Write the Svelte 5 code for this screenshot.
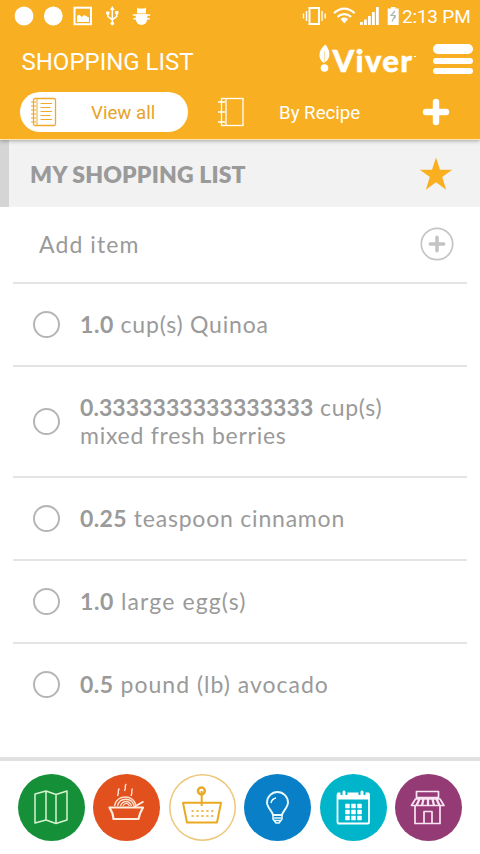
<script>
  const items = [
    { amount: '1.0', rest: 'cup(s) Quinoa', bold: 0.58, spacing: 0.8 },
    { amount: '0.3333333333333333', rest: 'cup(s)', second: 'mixed fresh berries', tall: true, bold: 0.06, spacing: 0.74 },
    { amount: '0.25', rest: 'teaspoon cinnamon', bold: 0.4, spacing: 0.79 },
    { amount: '1.0', rest: 'large egg(s)', bold: 0.58, spacing: 1.13 },
    { amount: '0.5', rest: 'pound (lb) avocado', bold: 0.5, spacing: 1.0 }
  ];
  const nav = [
    { id: 'map', color: '#159039' },
    { id: 'meals', color: '#e1501d' },
    { id: 'basket', color: '#ffffff' },
    { id: 'tips', color: '#087fc6' },
    { id: 'calendar', color: '#00b5ca' },
    { id: 'store', color: '#943b76' }
  ];
</script>

<div class="screen">
  <header>
    <div class="status">
      <svg class="left" width="160" height="33" viewBox="0 0 160 33" fill="#fff">
        <circle cx="24" cy="16" r="9.4" /><circle cx="53.3" cy="16" r="9.4" />
        <rect x="74.5" y="7.7" width="16.5" height="16.5" fill="none" stroke="#fff" stroke-width="2" />
        <path d="M77 22v-6l2-1.500 3 2.500 2-2 5 2.500V22z" />
        <g fill="none" stroke="#fff" stroke-width="1.500"><path d="M112.300 9v15M107.800 13.500v2.800l4.500 3.500 4.500-3.500V12.500" /></g>
        <path d="m112.300 6 2.400 4h-4.800zM106.200 11.500h3.200v3h-3.200zM115.200 11h3.200v3h-3.200z" /><circle cx="112.300" cy="23.600" r="1.800" />
        <path d="m137 7.500 1.500 1h6l1.500-1v6h-9z" />
        <path d="M132.800 14.200h17.400v1.500h-17.400zM133.300 18h16.400v1.500h-16.400z" />
        <path d="M135.700 14.500h11.600v4.500a5.800 6 0 0 1-11.600 0z" />
      </svg>
      <div class="right">
        <svg width="101" height="33" viewBox="300 0 101 33" fill="#fff">
          <rect x="309.500" y="8" width="9.500" height="16" fill="none" stroke="#fff" stroke-width="2" />
          <path d="M306.500 11v10M303.500 13.500v5M322 11v10M325.200 13.500v5" stroke="#fff" stroke-width="1.400" />
          <path d="M334 13.200q10.300-9 20.600 0M337.500 16.800q6.800-5.500 13.600 0" fill="none" stroke="#fff" stroke-width="2.200" />
          <path d="M340.500 19q3.800-2.800 7.600 0l-3.800 4.500z" />
          <path d="M360 22h2.800v3H360zM364 19.500h2.800V25H364zM368 16h2.800v9H368zM372 12h2.800v13H372zM376 7h2.800v18H376z" />
          <path d="M391 7h4.500v1.500h3.200V25h-11V8.500h3.300z" />
          <path d="m395 11-4 4.500h4l-3 6M395.500 15.500l-1 3" fill="none" stroke="#a9b7ad" stroke-width="1.200" />
        </svg>
        <span class="clock">2:13 PM</span>
      </div>
    </div>
    <div class="titlebar">
      <h1>SHOPPING LIST</h1>
      <div class="brand">
        <svg width="14" height="32" viewBox="0 0 14 32">
          <path d="M6.500 .5C2 4 .3 8 .5 12c.3 3.500 2.400 6 4.600 7 4.500-3 5.600-6.300 5.300-9.500C10.200 6 8.500 3 6.500 .5z" fill="#fff" />
          <path d="M5.500 7v11" stroke="#f8dfa9" stroke-width="1.200" />
          <circle cx="5.500" cy="24" r="3.800" fill="#fff" />
        </svg>
        <span class="logo">Viver</span><i></i>
      </div>
      <div class="burger"><b></b><b></b><b></b></div>
    </div>
    <div class="tabs">
      <div class="tab active">
        <svg width="26" height="30" viewBox="0 0 26 30" fill="none" stroke="#efaa2d">
          <rect x="2.500" y="1.500" width="22" height="27" rx="1.500" stroke-width="1.300" />
          <path d="M6 2v26M9.500 6.500h11.500M9.500 10.500h10M9.500 14.500h11.500M9.500 18.500h10M9.500 22.500h11.500" stroke-width="1" />
          <path d="M0 5h5M0 9h5M0 13h5M0 17h5M0 21h5M0 25h5" stroke-width="1.200" />
        </svg>
        <span class="all">View all</span>
      </div>
      <div class="tab plain">
        <svg width="27" height="30" viewBox="0 0 27 30" fill="none" stroke="#fff" stroke-width="1.300">
          <rect x="3.500" y="1.500" width="21.500" height="27" /><path d="M8 2v26M0 5h7M0 15h7M0 25h7" />
        </svg>
        <span class="recipe">By Recipe</span>
      </div>
      <svg class="plus" width="28" height="28" viewBox="0 0 28 28"><path d="M14 4v20M4 14h20" stroke="#fff" stroke-width="6.400" stroke-linecap="round" /></svg>
    </div>
  </header>

  <section class="heading">
    <h2>MY SHOPPING LIST</h2>
    <svg width="34" height="34" viewBox="0 0 34 34"><path fill="#faaf20" d="m17 .5 4 12.300h12.200l-10 7.200 4 12.700L17 25.200 6.800 32.700l4-12.700-10-7.200H13z" /></svg>
  </section>

  <main>
    <div class="add">
      <span>Add item</span>
      <svg width="34" height="34" viewBox="0 0 34 34"><circle cx="17" cy="17" r="15.700" fill="none" stroke="#c5c5c5" stroke-width="1.700" /><path d="M17 10.300v13.400M10.300 17h13.400" stroke="#c3c3c3" stroke-width="3.500" stroke-linecap="round" /></svg>
    </div>
    {#each items as item}
      <div class="item" class:tall={item.tall}>
        <span class="check"></span>
        <p style="letter-spacing: {item.spacing}px"><strong style="letter-spacing: {item.bold}px">{item.amount}</strong> {item.rest}{#if item.second}<br />{item.second}{/if}</p>
      </div>
    {/each}
  </main>

  <footer>
    {#each nav as entry}
      <div class="nav" class:selected={entry.id === 'basket'} style="background: {entry.color}">
        <svg width="67" height="67" viewBox="0 0 67 67" fill="none" stroke="#fff" stroke-linejoin="round">
          {#if entry.id === 'map'}
            <path d="m17 20 11-3 10 3.500L49 17v29l-11 3.500L28 46l-11 3zM28 17v29M38 20.500v29" stroke="#d7f2ce" stroke-width="1.500" />
          {:else if entry.id === 'meals'}
            <path d="M16.500 33.500h33.500L47 39.500l-1.500 5.500H20.500L19.500 39.500z" stroke="#ffede0" stroke-width="2.200" />
            <path d="M21.500 32c1.500-12 20-12 21.500 0M24.500 32c2-9 14.500-9 16.500 0M27.500 32c2-6 9-6 11 0M30 32c1.500-3.500 5-3.500 6.500 0" stroke="#ffe0ce" stroke-width="1.300" />
            <path d="m41 33 9.500-5.500" stroke="#ffede0" stroke-width="2" />
            <path d="M24.500 22q1-2 .8-4t1-3.500M31.500 17q1-2 .8-4t1-3M38 22q1-2 .8-4t.6-3.500" stroke-width="1.400" stroke="#ffe5da" />
          {:else if entry.id === 'basket'}
            <g stroke="#eba923" stroke-width="2"><path d="M14 28.700h38l-4 19.800H18z" /><path d="M32.700 17v15" /><circle cx="32.400" cy="17" r="3.400" stroke-width="2.500" /><path d="M22.500 37h23M22.500 42h23" stroke-width="1.700" stroke-dasharray="2.300 2.600" /></g>
          {:else if entry.id === 'tips'}
            <path d="M29 41c-.4-3.500-6-7.500-6-12.500a10.500 10.500 0 0 1 21 0c0 5-5.600 9-6 12.500z" stroke="#eafbff" stroke-width="1.900" />
            <path d="M29 41v4l3 4h3l3-4v-4M30 44h7M31 46.500h5" stroke="#eafbff" stroke-width="1.600" /><path d="M27 29q.8-4.300 5-5" stroke-width="1.400" />
          {:else if entry.id === 'calendar'}
            <rect x="17.500" y="20" width="31.500" height="29.500" rx="1" stroke-width="1.800" /><path d="M17.500 19h31.500v6H17.500z" fill="#fff" />
            <path d="M24 17v4M42 17v4" stroke="#00b5ca" stroke-width="7" /><path d="M24 18v4M42 18v4" stroke-width="3" stroke-linecap="round" />
            <path d="M25.500 30h4v4h-4zM31.500 30h4v4h-4zM37.500 30h4v4h-4zM25.500 36h4v4h-4zM31.500 36h4v4h-4zM37.500 36h4v4h-4zM25.500 42h4v4h-4zM31.500 42h4v4h-4zM37.500 42h4v4h-4z" fill="#fff" stroke-width=".5" />
          {:else}
            <g stroke="#f9e4f3" stroke-width="1.700"><path d="M21.500 17.500h22v6h-22zM20.500 25h24.500l4 6.500H16.500z" /><path d="m24.500 25-3 6.500M28.500 25l-1.500 6.500M33 25v6.500M37.500 25l1.500 6.500M41.500 25l3 6.500" stroke-width="2.300" /><path d="M20 32v17.500h25V32M29 49.500V37.500h8v12" /></g>
          {/if}
        </svg>
      </div>
    {/each}
  </footer>
</div>

<style>
  .screen { width: 480px; height: 854px; background: #fff; display: flex; flex-direction: column; overflow: hidden; font-family: Lato, "Liberation Sans", sans-serif; color: #9a9a9a; }
  svg { display: block; flex: none; }
  h1, h2, p { margin: 0; font-weight: 400; }
  span { white-space: nowrap; }
  header { height: 140px; flex: none; box-sizing: border-box; background: #f9af22; border-bottom: 1px solid #ffe5af; color: #fff; font-family: Roboto, sans-serif; position: relative; box-shadow: 0 1px 4px rgba(0, 0, 0, .32); }
  .status { height: 33px; display: flex; justify-content: space-between; }
  .right { display: flex; align-items: center; width: 180px; }
  .clock { font-size: 19px; line-height: 33px; letter-spacing: -.2px; margin-left: 1px; }
  .titlebar { height: 54px; display: flex; align-items: center; padding: 0 7px 0 21.5px; }
  h1 { font-size: 24px; width: 297px; line-height: 54px; white-space: nowrap; letter-spacing: 0; padding-top: 2px; box-sizing: border-box; height: 54px; }
  .brand { display: flex; align-items: center; width: 114.5px; }
  .logo { font: 900 31px/50px Lato, sans-serif; letter-spacing: 1.3px; -webkit-text-stroke: .5px #fff; }
  .brand i { width: 2px; height: 1px; background: #fff; margin: -8px 0 0 1px; }
  .burger { width: 40px; display: flex; flex-direction: column; gap: 4px; margin-top: -3px; }
  .burger b { height: 6px; background: #fff; border-radius: 5px; }
  .burger b:first-child { height: 10px; }
  .tabs { display: flex; align-items: center; height: 40px; margin-top: 5px; padding-left: 20px; }
  .tab { display: flex; align-items: center; height: 40px; font-size: 18.7px; box-sizing: border-box; }
  .tab span { padding-top: 1px; }
  .active { width: 168px; border-radius: 20px; background: #fff; color: #e8a329; padding-left: 11px; }
  .all { margin-left: 34px; }
  .plain { width: 215px; padding-left: 30px; }
  .recipe { margin-left: 34px; }
  .plus { margin-left: 19px; }
  .heading { height: 67px; flex: none; box-sizing: border-box; background: #f2f2f2; border-left: 9px solid #d5d5d5; display: flex; align-items: center; justify-content: space-between; padding: 1px 27px 0 21px; }
  h2 { font-size: 23px; font-weight: 800; white-space: nowrap; letter-spacing: .15px; }
  main { flex: 1; padding: 0 13px; font-size: 23px; }
  .add { height: 74.500px; box-sizing: border-box; display: flex; align-items: center; justify-content: space-between; padding: 0 13px 0 26px; letter-spacing: 1.1px; }
  .item { height: 83px; box-sizing: border-box; border-top: 2px solid #e4e4e4; display: flex; align-items: center; padding-left: 20px; }
  .tall { height: 111px; }
  .check { width: 27px; height: 27px; box-sizing: border-box; border: 2px solid #b5b5b5; border-radius: 50%; flex: none; }
  .item p { margin-left: 20px; line-height: 28px; white-space: nowrap; }
  .item strong { font-weight: 700; }
  footer { height: 97px; flex: none; box-sizing: border-box; border-top: 4px solid #e1e1e1; display: flex; align-items: center; gap: 8.500px; padding: 0 0 1px 17.500px; }
  .nav { width: 67px; height: 67px; flex: none; border-radius: 50%; }
  .selected { box-shadow: inset 0 0 0 1.500px #edc77c; }
</style>
